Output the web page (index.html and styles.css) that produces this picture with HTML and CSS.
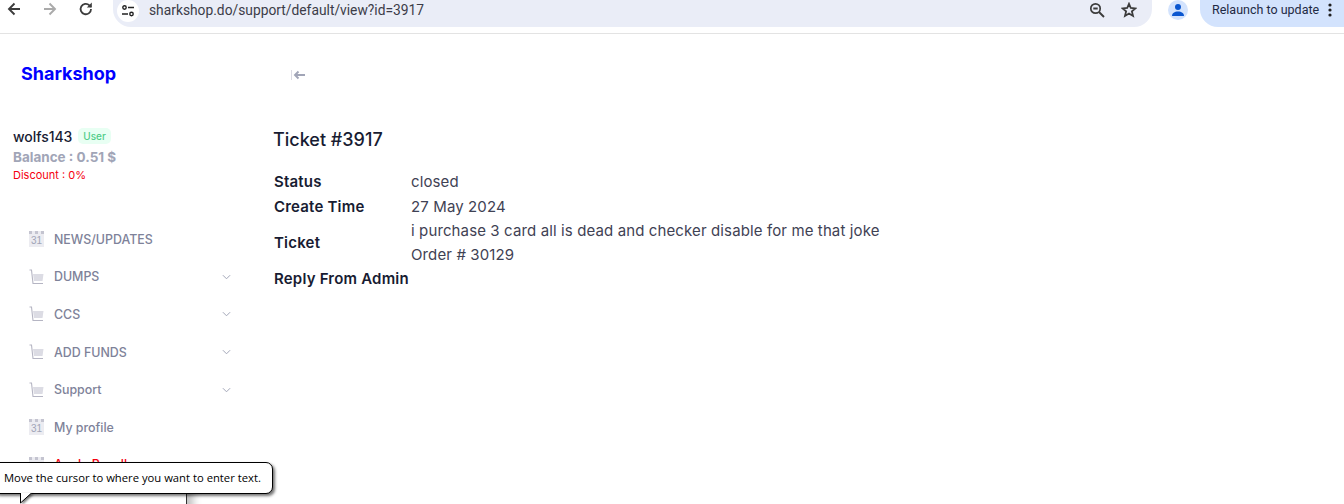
FILE: index.html
```html
<!DOCTYPE html>
<html lang="en">
<head>
<meta charset="utf-8">
<title>Ticket #3917</title>
<link rel="stylesheet" href="styles.css">
</head>
<body>
<header class="browser">
  <div class="nav">
    <svg class="nav-icon" viewBox="0 0 16 16"><path d="M14 8H3M8.500 2.500 3 8l5.500 5.500" fill="none" stroke="#3c3c3c" stroke-width="1.900"/></svg>
    <svg class="nav-icon" viewBox="0 0 16 16"><path d="M2 8h11M7.500 2.500 13 8l-5.500 5.500" fill="none" stroke="#aaa" stroke-width="1.900"/></svg>
    <svg class="nav-icon" viewBox="0 0 16 16"><path d="M13 8a5.200 5.200 0 1 1-1.600-3.700L13 5.800" fill="none" stroke="#3c3c3c" stroke-width="1.800"/><path d="M13.800 1.500v5H8.800z" fill="#3c3c3c"/></svg>
  </div>
  <div class="omnibox">
    <span class="tune">
      <svg viewBox="0 0 14 12" width="14" height="12"><circle cx="3.500" cy="2.500" r="1.700" fill="none" stroke="#222" stroke-width="1.400"/><path d="M7 2.500h6M1 9h6" stroke="#222" stroke-width="1.600"/><circle cx="10.500" cy="9" r="1.700" fill="none" stroke="#222" stroke-width="1.400"/></svg>
    </span>
    <span class="url">sharkshop.do/support/default/view?id=3917</span>
    <svg class="omni-icon" viewBox="0 0 16 16"><circle cx="6.500" cy="6.500" r="4.700" fill="none" stroke="#3c3c3c" stroke-width="1.700"/><path d="M4.300 6.500h4.400M10 10l5 5" stroke="#3c3c3c" stroke-width="1.900"/></svg>
    <svg class="omni-icon star" viewBox="0 0 16 16"><path d="m8 1.800 1.800 4.200 4.600.4-3.500 3 1.100 4.500L8 11.500l-4 2.400 1.100-4.500-3.500-3 4.600-.4z" fill="none" stroke="#3c3c3c" stroke-width="1.800"/></svg>
  </div>
  <span class="avatar">
    <svg viewBox="0 0 14 14" width="14" height="14"><circle cx="7" cy="4" r="3" fill="#0b57d0"/><path d="M1 13c0-3 2.500-4.500 6-4.500s6 1.500 6 4.500z" fill="#0b57d0"/></svg>
  </span>
  <div class="relaunch">
    <span>Relaunch to update</span>
    <svg viewBox="0 0 4 14" width="4" height="14"><circle cx="2" cy="2" r="1.600" fill="#1f1f1f"/><circle cx="2" cy="7" r="1.600" fill="#1f1f1f"/><circle cx="2" cy="12" r="1.600" fill="#1f1f1f"/></svg>
  </div>
</header>

<div class="page">
  <aside class="sidebar">
    <div class="brand">Sharkshop</div>
    <div class="user">
      <div class="user-line"><span class="username">wolfs143</span><span class="badge">User</span></div>
      <div class="balance">Balance : 0.51 $</div>
      <div class="discount">Discount : 0%</div>
    </div>
    <nav class="menu">
      <a class="item"><span class="cal">31</span><span class="label">NEWS/UPDATES</span></a>
      <a class="item"><svg class="cart" viewBox="0 0 15 16"><path d="M.5 1h2l1.500 13.500h10" fill="none" stroke="#b5b5c3" stroke-width="1.100"/><path d="M4 5h10.500l-1 7H5z" fill="#dcdce4"/></svg><span class="label">DUMPS</span><svg class="chev" viewBox="0 0 10 6"><path d="m1 1 4 4 4-4" fill="none" stroke="#a1a5b7" stroke-width="1.100"/></svg></a>
      <a class="item"><svg class="cart" viewBox="0 0 15 16"><path d="M.5 1h2l1.500 13.500h10" fill="none" stroke="#b5b5c3" stroke-width="1.100"/><path d="M4 5h10.500l-1 7H5z" fill="#dcdce4"/></svg><span class="label">CCS</span><svg class="chev" viewBox="0 0 10 6"><path d="m1 1 4 4 4-4" fill="none" stroke="#a1a5b7" stroke-width="1.100"/></svg></a>
      <a class="item"><svg class="cart" viewBox="0 0 15 16"><path d="M.5 1h2l1.500 13.500h10" fill="none" stroke="#b5b5c3" stroke-width="1.100"/><path d="M4 5h10.500l-1 7H5z" fill="#dcdce4"/></svg><span class="label">ADD FUNDS</span><svg class="chev" viewBox="0 0 10 6"><path d="m1 1 4 4 4-4" fill="none" stroke="#a1a5b7" stroke-width="1.100"/></svg></a>
      <a class="item"><svg class="cart" viewBox="0 0 15 16"><path d="M.5 1h2l1.500 13.500h10" fill="none" stroke="#b5b5c3" stroke-width="1.100"/><path d="M4 5h10.500l-1 7H5z" fill="#dcdce4"/></svg><span class="label">Support</span><svg class="chev" viewBox="0 0 10 6"><path d="m1 1 4 4 4-4" fill="none" stroke="#a1a5b7" stroke-width="1.100"/></svg></a>
      <a class="item"><span class="cal">31</span><span class="label">My profile</span></a>
      <a class="item"><span class="cal">31</span><span class="label red">Apply Reseller</span></a>
    </nav>
  </aside>
  <main class="content">
    <div class="toggle">
      <svg viewBox="0 0 15 10" width="15" height="10"><path d="M.5 0v10" stroke="#dcdce4"/><path d="M14 5H4M7.500 1.500 4 5l3.500 3.500" fill="none" stroke="#a1a5b7" stroke-width="1.900"/></svg>
    </div>
    <h1 class="title">Ticket #3917</h1>
    <table class="details">
      <tr class="row"><th>Status</th><td>closed</td></tr>
      <tr class="row"><th>Create Time</th><td>27 May 2024</td></tr>
      <tr class="row"><th>Ticket</th><td>i purchase 3 card all is dead and checker disable for me that joke<br>Order # 30129</td></tr>
      <tr class="row"><th>Reply From Admin</th><td></td></tr>
    </table>
  </main>
</div>

<div class="popup"></div>
<div class="tip">Move the cursor to where you want to enter text.</div>
<svg class="tail" viewBox="0 0 14 12" width="14" height="12"><path d="M.5 0v10L11.500 0z" fill="#fff"/><path d="M.5 0v10L11.500 0" fill="none" stroke="#000"/></svg>
</body>
</html>
```
FILE: styles.css
```css
* { box-sizing: border-box; }
html, body { margin: 0; height: 504px; overflow: hidden; background: #fff; }
body { font-family: Inter, "Liberation Sans", sans-serif; color: #181c32; position: relative; }

.browser { height: 34px; display: flex; align-items: flex-start; border-bottom: 1px solid #e3e3e3; font-family: Roboto, "Open Sans", sans-serif; }
.nav { display: flex; gap: 20px; padding: 1px 0 0 6px; width: 113px; flex: none; }
.nav-icon { width: 16px; height: 16px; }
.omnibox { width: 1039px; height: 27px; padding: 0 15px 8px 4px; background: #eaedf7; border-radius: 0 0 18px 18px; display: flex; align-items: center; }
.tune { width: 22px; height: 22px; background: #fff; border-radius: 50%; display: flex; align-items: center; justify-content: center; margin-top: 3px; flex: none; }
.url { font-size: 13.800px; color: #3c3c48; margin-left: 10px; flex: 1; }
.omni-icon { width: 16px; height: 16px; flex: none; }
.star { margin-left: 16px; }
.avatar { width: 20px; height: 20px; background: #d3e3fd; border-radius: 50%; margin: 0 0 0 16px; display: flex; align-items: center; justify-content: center; flex: none; }
.relaunch { margin-left: 12px; width: 144px; height: 27px; background: #d3e3fd; border-radius: 0 0 0 18px; display: flex; align-items: center; gap: 9px; padding: 0 0 8px 12px; flex: none; font-size: 12.500px; color: #1f2a44; white-space: nowrap; }

.page { display: flex; height: 470px; }
.sidebar { width: 265px; flex: none; padding-top: 29px; }
.brand { font-size: 18px; font-weight: 700; color: #0000ff; padding-left: 21px; line-height: 22px; }
.user { padding: 42px 0 0 13px; }
.user-line { display: flex; align-items: center; gap: 6px; height: 18px; }
.username { font-size: 14px; font-weight: 500; color: #181c32; letter-spacing: -.05px; }
.badge { font-size: 10px; font-weight: 500; color: #50cd89; background: #e8fff3; border-radius: 5px; padding: 2px 5px; line-height: 12px; }
.balance { font-size: 13.500px; font-weight: 700; color: #a1a5b7; line-height: 21px; margin-top: 2px; }
.discount { font-size: 11px; color: #f5000f; line-height: 15px; }
.menu { padding: 37.500px 0 0 29px; display: flex; flex-direction: column; }
.item { height: 37.600px; display: flex; align-items: center; width: 202px; }
.label { font-size: 12.400px; font-weight: 500; color: #7e8299; margin-left: 10px; flex: 1; }
.red { color: #f5000f; }
.cal { width: 15px; height: 16px; background: #ececf1; border-top: 3px dotted #c4c4d0; font-size: 10px; font-weight: 400; color: #a1a5b7; text-align: center; line-height: 13px; flex: none; font-family: "Liberation Sans", sans-serif; }
.cart { width: 15px; height: 16px; flex: none; }
.chev { width: 9px; height: 6px; flex: none; }

.content { flex: 1; padding-left: 9px; }
.toggle { height: 16px; margin: 36px 0 0 17px; line-height: 0; }
.title { font-size: 18px; font-weight: 500; color: #181c32; margin: 42px 0 0 -1px; line-height: 24px; }
.details { border-collapse: collapse; margin-top: 17px; font-size: 15px; }
.row th { text-align: left; font-weight: 600; color: #181c32; padding: 0; width: 137px; white-space: nowrap; line-height: 25px; letter-spacing: .2px; }
.row td { padding: 0; font-weight: 400; color: #3f4254; line-height: 23.500px; letter-spacing: .12px; }
.row:nth-child(-n+2) td { line-height: 25px; }

.popup { position: absolute; left: -4px; top: 480px; width: 191px; height: 30px; background: #fff; border: 1px solid #333; box-shadow: 6px 6px 8px rgba(0,0,0,.25); }
.tip { position: absolute; left: -8px; top: 462px; width: 281px; height: 32px; background: #fff; border: 1px solid #000; border-radius: 7px; box-shadow: 2px 2px 3px rgba(0,0,0,.55); font-family: "Open Sans", "Noto Sans", sans-serif; font-size: 11.250px; color: #000; padding-left: 11px; line-height: 30px; white-space: nowrap; }
.tail { position: absolute; left: 20px; top: 493px; filter: drop-shadow(2px 1px 1px rgba(0,0,0,.5)); }
```
